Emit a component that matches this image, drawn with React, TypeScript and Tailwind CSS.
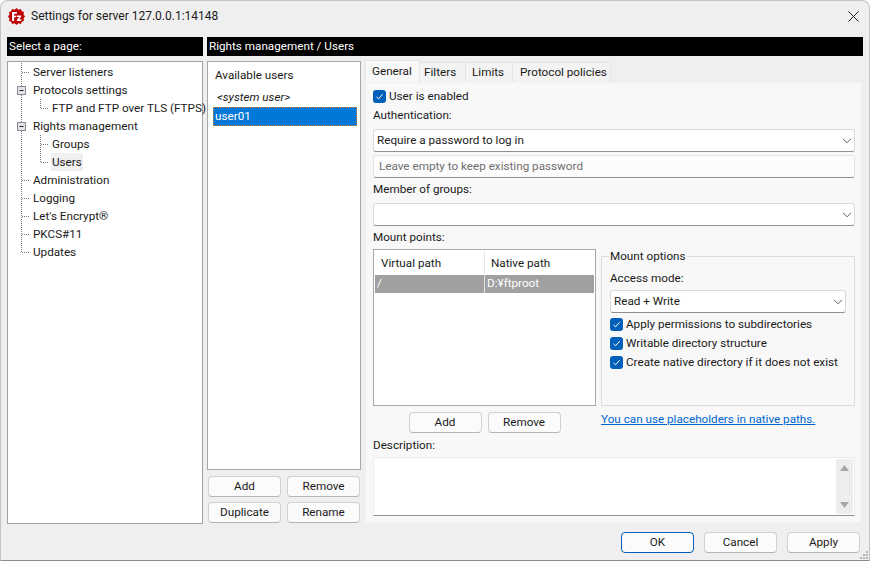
import React from "react";

const font = "font-['Roboto','Noto_Sans',sans-serif]";

function Check() {
  return (
    <span className="w-[13px] h-[13px] rounded-[3px] bg-[#005fb8] flex items-center justify-center shrink-0">
      <svg width="9" height="9" viewBox="0 0 9 9" fill="none">
        <path d="M1.5 4.8 L3.6 6.8 L7.6 2.2" stroke="#fff" strokeWidth="1" />
      </svg>
    </span>
  );
}

function Chevron() {
  return (
    <svg width="10" height="6" viewBox="0 0 10 6" fill="none" className="shrink-0">
      <path d="M1 0.8 L5 4.8 L9 0.8" stroke="#5a5a5a" strokeWidth="1" />
    </svg>
  );
}

function Btn({ label, w = "w-[73px] pt-[1px]", primary = false }: { label: string; w?: string; primary?: boolean }) {
  return (
    <button
      className={`${w} h-[21px] rounded-[4px] bg-[#fbfbfb] border text-[11.7px] leading-none text-[#1a1a1a] flex items-center justify-center ${
        primary ? "border-[#005fb8]" : "border-[#d0d0d0] border-b-[#b5b5b5]"
      }`}
    >
      {label}
    </button>
  );
}

function Select({ label, w }: { label?: string; w: string }) {
  return (
    <div className={`${w} h-[23px] rounded-[3px] bg-white border border-[#d9d9d9] border-b-[#8f8f8f] flex items-center justify-between pl-[3px] pr-[2px] text-[#1a1a1a]`}>
      <span>{label}</span>
      <Chevron />
    </div>
  );
}

function TreeRow({ label, indent = false, selected = false }: { label: string; indent?: boolean; selected?: boolean }) {
  return (
    <div className={`h-[18px] flex items-center ${indent ? "pl-[43px]" : "pl-[24px]"}`}>
      <span className={`px-[1px] leading-[18px] whitespace-nowrap ${selected ? "bg-[#f0f0f0]" : ""}`}>{label}</span>
    </div>
  );
}

function TreeLines() {
  return (
    <svg className="absolute left-0 top-0" width="60" height="200" fill="none">
      <g stroke="#7a7a7a" strokeDasharray="1 1">
        <path d="M13.5 1 V190" />
        <path d="M14 10.5 H22 M14 118.5 H22 M14 136.5 H22 M14 154.5 H22 M14 172.5 H22 M14 190.5 H22" />
        <path d="M32.5 37 V47 M33 46.5 H41" />
        <path d="M32.5 73 V101 M33 82.5 H41 M33 100.5 H41" />
      </g>
      <g>
        <rect x="9.5" y="24.5" width="8" height="8" fill="#e4e4e4" stroke="#8a8a9a" />
        <path d="M11.5 28.5 H15.5" stroke="#222" />
        <rect x="9.5" y="60.5" width="8" height="8" fill="#e4e4e4" stroke="#8a8a9a" />
        <path d="M11.5 64.5 H15.5" stroke="#222" />
      </g>
    </svg>
  );
}

function Tab({ label, active = false, w }: { label: string; active?: boolean; w: string }) {
  return (
    <div
      className={`${w} flex items-center border-r border-[#e5e5e5] ${
        active ? "h-[22px] bg-[#f8f8f8] border-l border-t" : "h-[20px] pt-[1px] bg-[#f3f3f3] border-t"
      } border-[#e5e5e5]`}
    >
      {label}
    </div>
  );
}

function CheckRow({ label }: { label: string }) {
  return (
    <div className="h-[19px] flex items-center gap-[3px]">
      <Check />
      <span className="whitespace-nowrap pt-[1px]">{label}</span>
    </div>
  );
}

export default function App() {
  return (
    <div className={`relative w-[870px] h-[561px] bg-[#efefef] overflow-hidden rounded-t-[8px] border border-[#c4c4c4] border-b-[#8c8c8c] flex flex-col text-[11.7px] text-[#1a1a1a] ${font}`}>
      {/* title bar */}
      <div className="h-[29px] flex items-center pl-[7px] pr-[10px] pt-[1px] shrink-0">
        <svg width="17" height="17" viewBox="0 0 16 16">
          <path d="M8 0 L9.8 1.6 L12.2 1 L13 3 L15 3.8 L14.6 6.1 L16 8 L14.6 9.9 L15 12.2 L13 13 L12.2 15 L9.8 14.4 L8 16 L6.2 14.4 L3.8 15 L3 13 L1 12.2 L1.4 9.9 L0 8 L1.4 6.1 L1 3.8 L3 3 L3.8 1 L6.2 1.6 Z" fill="#bf0000" />
          <path d="M3.8 3.8 H8.4 V5.5 H5.8 V7.2 H7.8 V8.8 H5.8 V12.2 H3.8 Z M8.4 7 H12.4 V8.2 L10.4 10.7 H12.4 V12.2 H8.4 V11 L10.4 8.5 H8.4 Z" fill="#fff" />
        </svg>
        <span className="ml-[6px] text-[12px] text-[#1a1a1a]">Settings for server 127.0.0.1:14148</span>
        <svg width="11" height="11" viewBox="0 0 11 11" fill="none" className="ml-auto">
          <path d="M0.5 0.5 L10.5 10.5 M10.5 0.5 L0.5 10.5" stroke="#222" strokeWidth="1" />
        </svg>
      </div>

      <div className="h-[495px] flex pt-[7px] pl-[6px] gap-[4px] shrink-0">
        {/* pages column */}
        <div className="w-[196px] flex flex-col gap-[5px]">
          <div className="h-[19px] bg-black text-white pl-[2px] flex items-center">Select a page:</div>
          <div className="relative h-[463px] bg-white border border-[#a0a0a8] pt-[1px]">
            <TreeLines />
            <TreeRow label="Server listeners" />
            <TreeRow label="Protocols settings" />
            <TreeRow label="FTP and FTP over TLS (FTPS)" indent />
            <TreeRow label="Rights management" />
            <TreeRow label="Groups" indent />
            <TreeRow label="Users" indent selected />
            <TreeRow label="Administration" />
            <TreeRow label="Logging" />
            <TreeRow label="Let's Encrypt®" />
            <TreeRow label="PKCS#11" />
            <TreeRow label="Updates" />
          </div>
        </div>

        {/* page body */}
        <div className="w-[656px] flex flex-col">
          <div className="h-[19px] bg-black text-white pl-[2px] flex items-center shrink-0">Rights management / Users</div>
          <div className="flex pt-[5px] gap-[4px]">
            {/* users column */}
            <div className="w-[154px] flex flex-col">
              <div className="h-[409px] bg-white border border-[#a8a8a8] flex flex-col pt-[5px]">
                <div className="h-[18px] pl-[7px] flex items-center">Available users</div>
                <div className="h-[19px] mt-[3px] pl-[9px] flex items-center italic">&lt;system user&gt;</div>
                <div className="h-[19px] ml-[5px] mr-[3px] pl-[1px] bg-[#0078d7] text-white flex items-center border border-dotted border-[#e07b20]">user01</div>
              </div>
              <div className="grid grid-cols-[73px_73px] gap-x-[6px] gap-y-[5px] pl-[1px] pt-[6px]">
                <Btn label="Add" />
                <Btn label="Remove" />
                <Btn label="Duplicate" />
                <Btn label="Rename" />
              </div>
            </div>

            {/* tabs */}
            <div className="w-[497px] flex flex-col">
              <div className="h-[21px] flex items-end">
                <Tab label="General" active w="w-[55px] pl-[6px]" />
                <Tab label="Filters" w="w-[46px] pl-[4px]" />
                <Tab label="Limits" w="w-[47px] pl-[6px]" />
                <Tab label="Protocol policies" w="w-[98px] pl-[7px]" />
              </div>
              <div className="h-[441px] bg-[#f8f8f8] border border-[#f0f0f0] pl-[7px] flex flex-col">
                <div className="h-[19px] mt-[4px] flex items-center gap-[3px]">
                  <Check />
                  <span className="pt-[1px]">User is enabled</span>
                </div>
                <div className="h-[19px] pt-[1px] flex items-center">Authentication:</div>
                <Select label="Require a password to log in" w="w-[482px] mt-[4px]" />
                <div className="w-[482px] h-[23px] mt-[3px] rounded-[3px] bg-[#fcfcfc] border border-[#e5e5e5] border-b-[#8f8f8f] pl-[5px] flex items-center text-[#6f6f6f]">
                  Leave empty to keep existing password
                </div>
                <div className="h-[19px] mt-[2px] pt-[1px] flex items-center">Member of groups:</div>
                <Select w="w-[482px] mt-[4px]" />
                <div className="h-[19px] mt-[2px] flex items-center">Mount points:</div>

                <div className="flex mt-[2px] gap-[5px]">
                  <div className="w-[223px] flex flex-col">
                    <div className="h-[157px] bg-white border border-[#a8a8a8] p-[1px]">
                      <div className="h-[24px] pt-[1px] flex">
                        <div className="w-[110px] pl-[6px] flex items-center border-r border-[#e5e5e5]">Virtual path</div>
                        <div className="pl-[6px] flex items-center">Native path</div>
                      </div>
                      <div className="h-[18px] flex bg-[#a0a0a0] text-white">
                        <div className="w-[110px] pl-[2px] flex items-center border-r border-[#e5e5e5]">/</div>
                        <div className="pl-[2px] flex items-center">D:¥ftproot</div>
                      </div>
                    </div>
                    <div className="flex justify-center gap-[6px] mt-[6px]">
                      <Btn label="Add" />
                      <Btn label="Remove" />
                    </div>
                  </div>

                  <div className="w-[254px] flex flex-col">
                    <fieldset className="h-[157px] min-w-0 border border-[#dcdcdc] px-[8px] m-0">
                      <legend className="-ml-[1px] px-[1px] leading-[14px] h-[14px]">Mount options</legend>
                      <div className="h-[18px] mt-[7px] flex items-center">Access mode:</div>
                      <Select label="Read + Write" w="w-[236px] mt-[2px]" />
                      <div className="mt-[2px]">
                        <CheckRow label="Apply permissions to subdirectories" />
                        <CheckRow label="Writable directory structure" />
                        <CheckRow label="Create native directory if it does not exist" />
                      </div>
                    </fieldset>
                    <a className="mt-[5px] text-[#0066cc] underline whitespace-nowrap">You can use placeholders in native paths.</a>
                  </div>
                </div>

                <div className="h-[19px] mt-[3px] pt-[1px] flex items-center">Description:</div>
                <div className="w-[482px] h-[59px] mt-[2px] bg-white border border-[#ececec] border-b-[#8f8f8f] flex justify-end">
                  <div className="w-[17px] my-[1px] mr-[1px] bg-[#ededed] flex flex-col items-center justify-between py-[6px]">
                    <svg width="9" height="6" viewBox="0 0 9 6"><path d="M4.5 0 L9 6 H0 Z" fill="#a6a6a6" /></svg>
                    <svg width="9" height="6" viewBox="0 0 9 6"><path d="M0 0 H9 L4.5 6 Z" fill="#a6a6a6" /></svg>
                  </div>
                </div>
              </div>
            </div>
          </div>
        </div>
      </div>

      {/* footer */}
      <div className="flex justify-end gap-[10px] pr-[9px] pt-[7px]">
        <Btn label="OK" w="w-[73px]" primary />
        <Btn label="Cancel" w="w-[73px]" />
        <Btn label="Apply" w="w-[73px]" />
      </div>
      <svg className="absolute right-0 bottom-0" width="9" height="9" viewBox="0 0 9 9">
        <g fill="#b4b4b4">
          <rect x="6" y="0" width="2" height="2" />
          <rect x="3" y="3" width="2" height="2" />
          <rect x="6" y="3" width="2" height="2" />
          <rect x="0" y="6" width="2" height="2" />
          <rect x="3" y="6" width="2" height="2" />
          <rect x="6" y="6" width="2" height="2" />
        </g>
      </svg>
    </div>
  );
}
